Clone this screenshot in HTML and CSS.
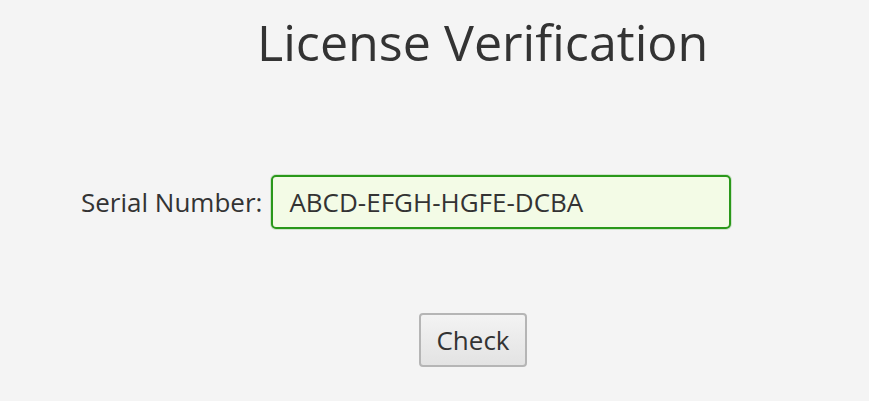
FILE: index.html
```html
<!DOCTYPE html>
<html>
<head>
<meta charset="utf-8">
<link rel="stylesheet" href="styles.css">
</head>
<body>
<div class="page">
  <h1 class="title">License Verification</h1>
  <div class="row">
    <label class="label" for="serial">Serial Number:</label>
    <input class="serial" id="serial" type="text" value="ABCD-EFGH-HGFE-DCBA">
  </div>
  <div class="actions">
    <button class="check" type="button">Check</button>
  </div>
</div>
</body>
</html>
```
FILE: styles.css
```css
html, body {
  margin: 0;
  padding: 0;
  background: #f4f4f4;
}
body {
  font-family: "Open Sans", "Noto Sans", sans-serif;
  color: #333333;
  width: 869px;
  height: 401px;
  overflow: hidden;
}
.page {
  display: flex;
  flex-direction: column;
}
.title {
  margin: 10px 0 0 257px;
  font-size: 50.2px;
  font-weight: 400;
  line-height: 64px;
  color: #333333;
}
.row {
  display: flex;
  align-items: center;
  gap: 9px;
  margin: 101px 0 0 81px;
}
.label {
  font-size: 26px;
  color: #333333;
}
.serial {
  box-sizing: border-box;
  width: 460px;
  height: 54px;
  border: 2px solid #2a981a;
  border-radius: 5px;
  background: #f3fbe6;
  box-shadow: 0 0 0 1px rgba(42, 152, 26, 0.18);
  padding: 0 16px;
  font-family: "Open Sans", sans-serif;
  font-size: 26px;
  color: #333333;
  outline: none;
}
.actions {
  margin: 84px 0 0 419px;
}
.check {
  box-sizing: border-box;
  width: 108px;
  height: 54px;
  border: 2px solid #b5b5b5;
  border-radius: 4px;
  background: linear-gradient(#f3f3f3, #e3e3e3);
  font-family: "Open Sans", sans-serif;
  font-size: 26px;
  color: #333333;
  padding: 0;
}
```
